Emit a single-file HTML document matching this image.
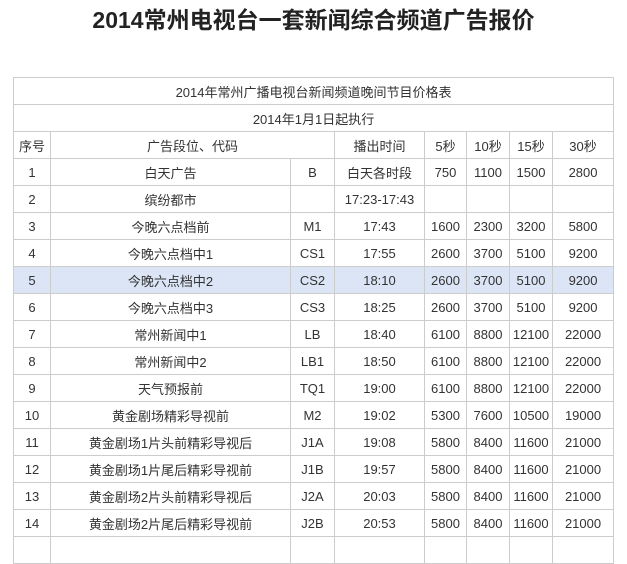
<!DOCTYPE html>
<html><head><meta charset="utf-8"><style>
body{margin:0;background:#fff;width:627px;height:541px;overflow:hidden;font-family:"Liberation Sans","Noto Sans CJK SC",sans-serif;color:#333}
h1{position:absolute;left:0;top:5px;width:627px;margin:0;text-align:center;font-size:23px;font-weight:bold;line-height:30px;color:#222}
table{position:absolute;left:13px;top:77px;border-collapse:collapse;table-layout:fixed;width:600px;font-size:13px}
td{border:1px solid #ccc;height:26px;padding:0;text-align:center;white-space:nowrap;overflow:hidden}
tr.h td{background:#dbe5f6}
</style></head><body>
<h1>2014常州电视台一套新闻综合频道广告报价</h1>
<table>
<colgroup><col style="width:37px"><col style="width:240px"><col style="width:44px"><col style="width:90px"><col style="width:42px"><col style="width:43px"><col style="width:43px"><col style="width:61px"></colgroup>
<tr><td colspan="8">2014年常州广播电视台新闻频道晚间节目价格表</td></tr>
<tr><td colspan="8">2014年1月1日起执行</td></tr>
<tr><td>序号</td><td colspan="2">广告段位、代码</td><td>播出时间</td><td>5秒</td><td>10秒</td><td>15秒</td><td>30秒</td></tr>
<tr><td>1</td><td>白天广告</td><td>B</td><td>白天各时段</td><td>750</td><td>1100</td><td>1500</td><td>2800</td></tr>
<tr><td>2</td><td>缤纷都市</td><td></td><td>17:23-17:43</td><td></td><td></td><td></td><td></td></tr>
<tr><td>3</td><td>今晚六点档前</td><td>M1</td><td>17:43</td><td>1600</td><td>2300</td><td>3200</td><td>5800</td></tr>
<tr><td>4</td><td>今晚六点档中1</td><td>CS1</td><td>17:55</td><td>2600</td><td>3700</td><td>5100</td><td>9200</td></tr>
<tr class="h"><td>5</td><td>今晚六点档中2</td><td>CS2</td><td>18:10</td><td>2600</td><td>3700</td><td>5100</td><td>9200</td></tr>
<tr><td>6</td><td>今晚六点档中3</td><td>CS3</td><td>18:25</td><td>2600</td><td>3700</td><td>5100</td><td>9200</td></tr>
<tr><td>7</td><td>常州新闻中1</td><td>LB</td><td>18:40</td><td>6100</td><td>8800</td><td>12100</td><td>22000</td></tr>
<tr><td>8</td><td>常州新闻中2</td><td>LB1</td><td>18:50</td><td>6100</td><td>8800</td><td>12100</td><td>22000</td></tr>
<tr><td>9</td><td>天气预报前</td><td>TQ1</td><td>19:00</td><td>6100</td><td>8800</td><td>12100</td><td>22000</td></tr>
<tr><td>10</td><td>黄金剧场精彩导视前</td><td>M2</td><td>19:02</td><td>5300</td><td>7600</td><td>10500</td><td>19000</td></tr>
<tr><td>11</td><td>黄金剧场1片头前精彩导视后</td><td>J1A</td><td>19:08</td><td>5800</td><td>8400</td><td>11600</td><td>21000</td></tr>
<tr><td>12</td><td>黄金剧场1片尾后精彩导视前</td><td>J1B</td><td>19:57</td><td>5800</td><td>8400</td><td>11600</td><td>21000</td></tr>
<tr><td>13</td><td>黄金剧场2片头前精彩导视后</td><td>J2A</td><td>20:03</td><td>5800</td><td>8400</td><td>11600</td><td>21000</td></tr>
<tr><td>14</td><td>黄金剧场2片尾后精彩导视前</td><td>J2B</td><td>20:53</td><td>5800</td><td>8400</td><td>11600</td><td>21000</td></tr>
<tr><td>&nbsp;</td><td></td><td></td><td></td><td></td><td></td><td></td><td></td></tr>
</table>
</body></html>
